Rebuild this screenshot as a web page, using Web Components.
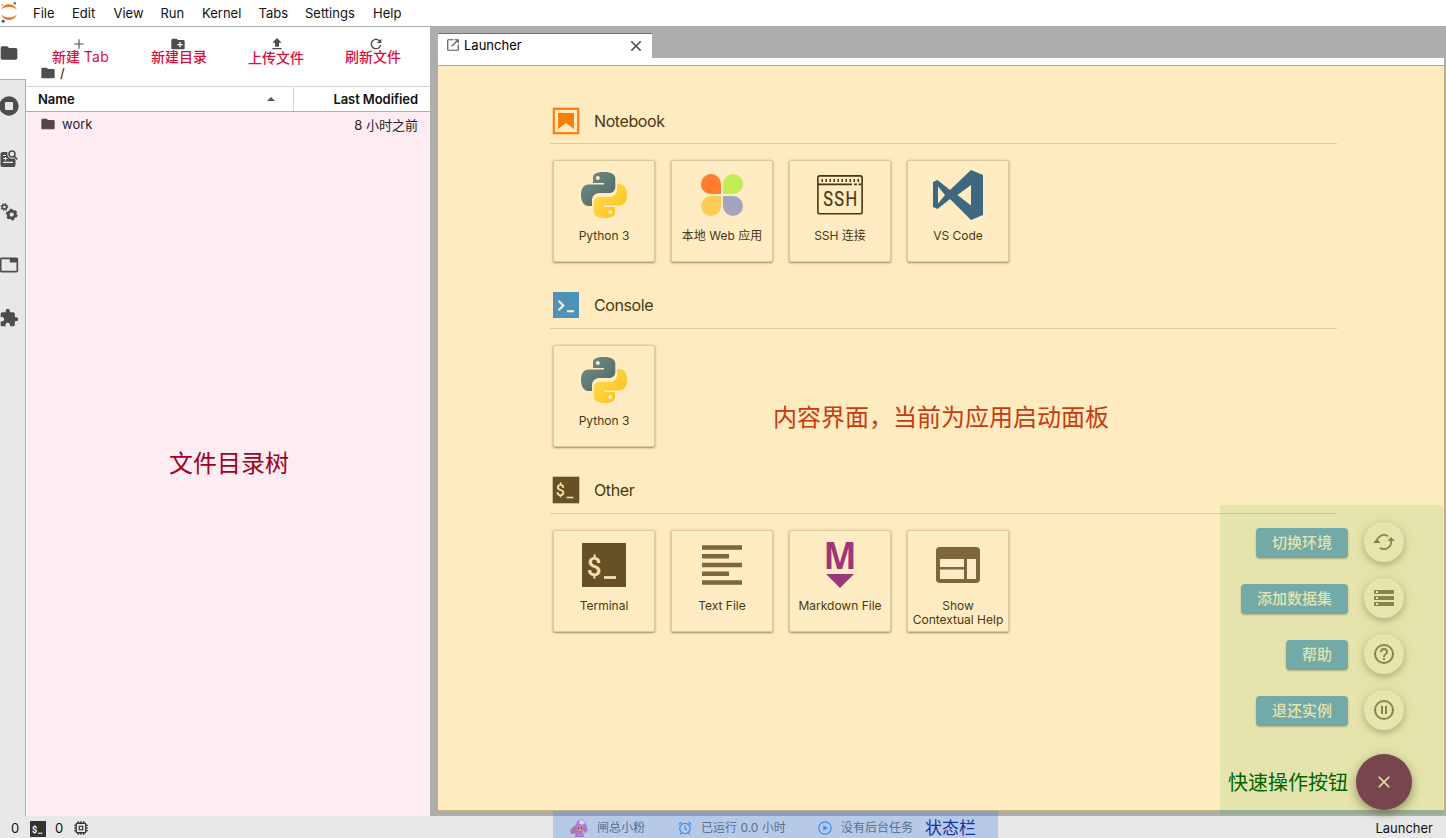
<!DOCTYPE html>
<html lang="zh-CN">
<head>
<meta charset="utf-8">
<title>JupyterLab</title>
<style>
html,body{margin:0;height:100%}
body{font-family:Inter,"Noto Sans CJK SC",sans-serif;font-size:13px;color:#1c1c1c;background:#fff;overflow:hidden}
</style>
</head>
<body>
<lab-app></lab-app>
<script>
const ICONS = {
folder:['0 0 24 24','<path fill="currentColor" d="M10 4H4c-1.1 0-2 .9-2 2v12c0 1.1.9 2 2 2h16c1.1 0 2-.9 2-2V8c0-1.1-.9-2-2-2h-8z"/>'],
plus:['0 0 24 24','<path d="M12 4v16M4 12h16" stroke="currentColor" stroke-width="1.900"/>'],
newfolder:['0 0 24 24','<path fill="currentColor" d="M20 6h-8l-2-2H4c-1.1 0-2 .9-2 2v12c0 1.1.9 2 2 2h16c1.1 0 2-.9 2-2V8c0-1.1-.9-2-2-2zm-1 8h-3v3h-2v-3h-3v-2h3V9h2v3h3v2z"/>'],
upload:['0 0 24 24','<path fill="currentColor" d="M9 16h6v-6h4l-7-7-7 7h4zm-4 2h14v2H5z"/>'],
refresh:['0 0 18 18','<path fill="currentColor" d="M9 13.5c-2.49 0-4.5-2.01-4.5-4.5S6.51 4.5 9 4.5c1.24 0 2.36.52 3.17 1.33L10 8h5V3l-1.76 1.76C12.15 3.68 10.66 3 9 3 5.69 3 3.01 5.69 3.01 9S5.69 15 9 15c2.97 0 5.43-2.16 5.9-5h-1.52c-.46 2-2.24 3.5-4.38 3.5z"/>'],
stop:['0 0 20 20','<circle cx="10" cy="10" r="9.7" fill="currentColor"/><rect x="6" y="6" width="8" height="8" rx=".8" fill="#e8e8e8"/>'],
inspect:['0 0 20 20','<path fill="currentColor" d="M3 3h5.500a5 5 0 0 0 4.500 6.800c.8 0 1.500-.2 2-.5l1.500 1.500V16a2 2 0 0 1-2 2H3.500a2 2 0 0 1-2-2V4.500z"/><path d="M4 6.500h3M4 9.500h4.500M4 13.300h10" stroke="#e8e8e8" stroke-width="1.200"/><path d="M6.500 8v3.500" stroke="#e8e8e8" stroke-width="1"/><circle cx="13" cy="5" r="3" stroke="currentColor" stroke-width="1.600"/><path d="m15 7.200 3.200 3.200" stroke="currentColor" stroke-width="1.700"/>'],
gears:['0 0 20 20','<g fill="none" stroke="currentColor"><circle cx="12.7" cy="12.6" r="3.5" stroke-width="2.8"/><circle cx="12.7" cy="12.6" r="5.1" stroke-width="1.7" stroke-dasharray="2.7 2.64"/><circle cx="5.4" cy="5" r="2.1" stroke-width="1.6"/><circle cx="5.4" cy="5" r="3.3" stroke-width="1.2" stroke-dasharray="1.4 1.19"/></g>'],
tab:['0 0 24 24','<path fill="currentColor" d="M21 3H3c-1.1 0-2 .9-2 2v14c0 1.1.9 2 2 2h18c1.1 0 2-.9 2-2V5c0-1.1-.9-2-2-2zm0 16H3V5h10v4h8z"/>'],
puzzle:['0 0 24 24','<path fill="currentColor" d="M20.5 11H19V7c0-1.1-.9-2-2-2h-4V3.500a2.500 2.500 0 0 0-5 0V5H4c-1.100 0-2 .9-2 2v3.800h1.500c1.500 0 2.700 1.200 2.700 2.700S5 16.200 3.500 16.200H2V20c0 1.100.9 2 2 2h3.800v-1.500c0-1.500 1.200-2.700 2.700-2.700s2.700 1.200 2.700 2.700V22H17c1.100 0 2-.9 2-2v-4h1.500a2.500 2.500 0 0 0 0-5z"/>'],
launch:['0 0 24 24','<path fill="currentColor" d="M20 20H4V4h9V2H4a2 2 0 0 0-2 2v16c0 1.100.9 2 2 2h16a2 2 0 0 0 2-2v-9h-2zM15 2v2h3.600l-9.800 9.800 1.400 1.400L20 5.400V9h2V2z"/>'],
close:['0 0 24 24','<path d="m5 5 14 14M19 5 5 19" stroke="currentColor" stroke-width="2.300"/>'],
notebook:['0 0 28 28','<rect x="1.8" y="1.800" width="24.400" height="24.400" fill="none" stroke="#f97f0d" stroke-width="2.200"/><path fill="#f97f0d" d="M6 6h16v16l-8-6-8 6z"/>'],
console:['0 0 28 28','<path fill="#4e91b9" d="M1 1h26v26H1z"/><path d="m6.500 9.700 4.800 4.800-4.800 4.800" fill="none" stroke="#ffecc5" stroke-width="2.300"/><path d="M15 20.200h7" stroke="#ffecc5" stroke-width="2.200"/>'],
term:['0 0 28 28','<path fill="#655125" d="M.7.700h26.600v26.600H.700z"/><text x="3.800" y="20" font-family="Roboto" font-weight="500" font-size="16" fill="#f7dfae">$</text><path d="M14.500 21.500h7" stroke="#f7dfae" stroke-width="1.600"/>'],
termbig:['0 0 44 44','<path fill="#655125" d="M0 0h44v44H0z"/><text x="4.800" y="32.500" font-family="Roboto" font-weight="500" font-size="26" fill="#f7dfae">$</text><path d="M22 34.500h12" stroke="#f7dfae" stroke-width="2.800"/>'],
python:['0 0 46 46','<defs><linearGradient id="b" x2="1" y2="1"><stop stop-color="#738f8b"/><stop offset="1" stop-color="#4e6560"/></linearGradient><linearGradient id="y" x2="1" y2="1"><stop stop-color="#ffdf55"/><stop offset="1" stop-color="#ffbd17"/></linearGradient></defs><path fill="url(#b)" d="M22.700 0C14 0 12 2.500 12 6v5h11v1.500H7.500C3 12.500 0 16.500 0 23s3 11 7.500 11H11v-6c0-4 3.300-7 7.500-7h9.800c3.500 0 6-2.700 6-6V6.200C34.300 2.600 30.500 0 22.700 0z"/><circle cx="16.800" cy="6" r="2" fill="#ffecc5"/><path fill="url(#y)" d="M23.300 46C32 46 34 43.500 34 40v-5H23v-1.500h15.500C43 33.500 46 29.500 46 23s-3-11-7.500-11H36v6c0 4-3.300 7-7.500 7h-9.800c-3.500 0-6 2.700-6 6v8.800c0 3.600 3.800 6.200 10.600 6.200z"/><circle cx="29.200" cy="40" r="2" fill="#ffecc5"/>'],
web:['0 0 42 42','<path fill="#ff7b2e" d="M20 20H9.500A9.500 9.500 0 0 1 0 10.200 10 10 0 0 1 10 0a10 10 0 0 1 10 10z"/><path fill="#c1ed55" d="M22 20V10A10 10 0 0 1 32 0a10 10 0 0 1 10 10 10 10 0 0 1-10 10z"/><path fill="#fecb59" d="M20 22v10a10 10 0 0 1-20 0 10 10 0 0 1 10-10z"/><path fill="#a5a4bf" d="M22 22h10a10 10 0 1 1-10 10z"/>'],
ssh:['0 0 46 40','<g fill="none" stroke="#483615" stroke-width="1.600"><rect x=".9" y=".9" width="44.200" height="37.800" rx="1.800"/><path d="M1 9.400h34M37 9.400h3M41.500 9.400h3"/><path d="M4.500 5.500h38" stroke-width="3" stroke-dasharray="1.500 2.500"/></g><text transform="translate(6.200 31) scale(.8 1)" letter-spacing="1.700" font-family="Roboto" font-size="20.500" fill="#483615" stroke="#483615" stroke-width=".2">SSH</text>'],
vscode:['0 0 50 50','<path fill="#3d687f" fill-rule="evenodd" d="M38 0 50 5v40l-12 5-21-21L4.500 39 0 37V12l4.500-2L17 20zM38 15 24.500 25 38 35.500zM5 16.500v17l7-8.500z"/>'],
text:['0 0 40 40','<path d="M0 2.500h40M0 11.200h27M0 20h40M0 28.800h27M0 37.500h40" stroke="#7b683d" stroke-width="4.600"/>'],
md:['0 0 32 48','<text x="16" y="27.500" text-anchor="middle" textLength="33" lengthAdjust="spacingAndGlyphs" font-family="Noto Sans" font-weight="700" font-size="37" fill="#9b3778">M</text><path fill="#9b3778" d="M2 33h28L16 47z"/>'],
help:['0 0 44 36','<rect width="44" height="36" rx="4" fill="#7b683d"/><path fill="#ffecc5" d="M4 12h24v8H4zM4 22.500h24V32H4zM31 12h9v20h-9z"/>'],
swap:['0 0 24 24','<g fill="none" stroke="currentColor" stroke-width="1.900"><path d="M4.200 13a7.800 7.800 0 0 1 12.300-7.200M19.800 11a7.800 7.800 0 0 1-12.300 7.200"/></g><path fill="currentColor" d="m.2 13 4-4.500 4 4.500zM23.800 11l-4-4.500-4 4.500z"/>'],
storage:['0 0 20 16','<path fill="currentColor" fill-rule="evenodd" d="M0 0h20v4H0zM2 1v2h2V1zM0 6h20v4H0zM2 7v2h2V7zM0 12h20v4H0zM2 13v2h2v-2z"/>'],
question:['0 0 24 24','<path fill="currentColor" d="M11 18h2v-2h-2zm1-16a10 10 0 1 0 0 20 10 10 0 0 0 0-20zm0 18a8 8 0 1 1 0-16 8 8 0 0 1 0 16zm0-14a4 4 0 0 0-4 4h2a2 2 0 1 1 4 0c0 2-3 1.750-3 5h2c0-2.250 3-2.500 3-5a4 4 0 0 0-4-4z"/>'],
pause:['0 0 24 24','<circle cx="12" cy="12" r="9" fill="none" stroke="currentColor" stroke-width="2"/><path d="M10 8v8M14 8v8" stroke="currentColor" stroke-width="2"/>'],
chip:['0 0 16 16','<path d="M4.800 0v16M8 0v16M11.200 0v16M0 4.800h16M0 8h16M0 11.200h16" stroke="#333" stroke-width="1.300"/><rect x="2.500" y="2.500" width="11" height="11" rx="1.500" fill="#e8e8e8" stroke="#333" stroke-width="1.600"/><rect x="6" y="6" width="4" height="4" fill="none" stroke="#333" stroke-width="1.300"/>'],
sterm:['0 0 16 16','<path fill="#333" d="M0 0h16v16H0z"/><text x="2" y="11.500" font-family="Roboto" font-weight="700" font-size="9" fill="#fff">$</text><path d="M8 12.200h4.500" stroke="#fff"/>'],
alarm:['0 0 14 14','<g fill="none" stroke="#388bf2" stroke-width="1.200"><circle cx="7" cy="7.500" r="5.200"/><path d="M7 4.500v3.300l2 1.200M.8 3.500 3.500 1M13.200 3.500 10.500 1M3.500 11.500 2 13.500M10.500 11.500l1.500 2"/></g>'],
play:['0 0 14 14','<circle cx="7" cy="7" r="6.200" fill="none" stroke="#388bf2" stroke-width="1.200"/><path fill="#388bf2" d="M5.300 4.200v5.600L9.700 7z"/>'],
avatar:['0 0 20 18','<path fill="#b779cf" d="M6 5 8 1l5-.5 3 4 1 4-4 3H7L4 8z"/><path fill="#a678bb" d="m0 11 4-4 4 3-1 4-3 1H1zM12 10l4-2 2 3-3 3zM6 12h7l1 6H5z"/><path fill="#cbd7f5" d="M9.500 1.500 13 1l2 3-3 2-3-1.500z"/><path fill="#c98a9d" d="M7 7h6l-1 5H8z"/><path d="M8.500 8v2M11.500 8v2" stroke="#574879" stroke-width=".9"/><path fill="#c77bce" d="m7 13 3 2 3-2-1 4H8z"/>'],
logo:['0 0 20 26','<path fill="#f37726" d="M1.300 9.500C2.600 6 5.600 4.200 9 4.200s6.400 1.800 7.700 5.300C14.800 7.800 12 7 9 7s-5.800.8-7.700 2.500zM1.300 14.700C2.600 18.300 5.600 20.100 9 20.100s6.400-1.800 7.700-5.400C14.800 16.400 12 17.300 9 17.300s-5.800-.9-7.700-2.600z"/><g fill="#5f5f5f"><circle cx="14.800" cy="3.200" r="1.200"/><circle cx="2.300" cy="5" r=".7"/><circle cx="3.200" cy="21.200" r="1.600"/></g>']
};
function define(name, render){
  customElements.define(name, class extends HTMLElement{
    connectedCallback(){
      if(this.shadowRoot) return;
      this.attachShadow({mode:'open'}).innerHTML = render(this);
    }
  });
}
define('ui-icon', el=>{
  const [box,art]=ICONS[el.getAttribute('name')];
  const w=el.getAttribute('w'), h=el.getAttribute('h')||w;
  return `<style>:host{display:block;flex:none;width:${w}px;height:${h}px}svg{display:block;overflow:visible}</style><svg width="${w}" height="${h}" viewBox="${box}" fill="none">${art}</svg>`;
});
define('menu-bar', ()=>`<style>
:host{display:flex;border-bottom:1px solid #adadab;background:#fff;box-sizing:border-box;height:27px}
nav{display:flex;margin-left:13px;line-height:27px;color:#111}
span{display:block;white-space:nowrap}
</style><ui-icon name="logo" w="20" h="26"></ui-icon><nav>${[['File',39],['Edit',41.500],['View',47],['Run',41.500],['Kernel',56.500],['Tabs',46.500],['Settings',68],['Help',40]].map(([t,w])=>`<span style="width:${w}px">${t}</span>`).join('')}</nav>`);
define('side-rail', ()=>`<style>
:host{display:flex;flex-direction:column;width:26px;background:#e8e8e8;color:#4d4d4d}
div{height:53px;box-sizing:border-box;border-right:1px solid #adadab;display:flex;align-items:center;padding-bottom:2px}
ui-icon{margin-left:-1px}
.on{background:#fff;border-right:0;border-bottom:1px solid #adadab;padding-bottom:0}
.fill{flex:1;height:auto}
</style><div class="on"><ui-icon name="folder" w="20"></ui-icon></div>${['stop','inspect','gears','tab','puzzle'].map(n=>`<div><ui-icon name="${n}" w="20"></ui-icon></div>`).join('')}<div class="fill"></div>`);
define('note-text', ()=>`<style>:host{position:absolute;white-space:nowrap;line-height:1.2;z-index:3}</style><slot></slot>`);
define('file-browser', ()=>`<style>
:host{display:flex;flex-direction:column;width:404px;background:#fff;position:relative;color:#111}
.tools{height:33px;display:grid;grid-template-columns:repeat(4,99px);padding:9px 0 0 3px;box-sizing:border-box;color:#4d4d4d;align-items:start;justify-items:center}
.tools ui-icon:first-child{margin-top:1px}
.crumb{height:26px;display:flex;align-items:center;padding-left:14px;gap:4px;color:#4d4d4d}
.crumb b{font-weight:400;color:#111}
.head{height:26px;box-sizing:border-box;display:flex;border-top:1px solid #d4d4d4;border-bottom:1px solid #adadab;font-weight:600;line-height:25px}
.name{width:268px;box-sizing:border-box;border-right:1px solid #d4d4d4;padding:0 18px 0 12px;display:flex;justify-content:space-between;align-items:center}
.name i{border:4px solid transparent;border-top:0;border-bottom:4px solid #555}
.mod{flex:1;text-align:right;padding-right:12px;letter-spacing:-.08px}
.list{flex:1;background:#fdedf3;margin-left:1px;color:#291e22}
.row{display:flex;align-items:center;height:24px;padding:0 12px 0 13px;gap:6px}
.row span{flex:1}
note-text{font-size:14px;color:#d70f40;font-weight:500}
</style>
<div class="tools"><ui-icon name="plus" w="14"></ui-icon><ui-icon name="newfolder" w="16"></ui-icon><ui-icon name="upload" w="16"></ui-icon><ui-icon name="refresh" w="16"></ui-icon></div>
<div class="crumb"><ui-icon name="folder" w="16"></ui-icon><b>/</b></div>
<div class="head"><div class="name">Name<i></i></div><div class="mod">Last Modified</div></div>
<div class="list"><div class="row"><ui-icon name="folder" w="16" style="color:#54474b"></ui-icon><span>work</span><time>8 小时之前</time></div></div>
<note-text style="left:26px;top:22px">新建 <span style="font-weight:400;letter-spacing:.3px">Tab</span></note-text><note-text style="left:125px;top:22px">新建目录</note-text><note-text style="left:222px;top:23px">上传文件</note-text><note-text style="left:319px;top:22px">刷新文件</note-text>
<note-text style="left:143px;top:423px;font-size:24px;color:#a00026;font-weight:400">文件目录树</note-text>`);
define('launch-card', el=>`<style>
:host{display:flex;flex-direction:column;align-items:center;width:102px;height:102px;box-sizing:border-box;border:1px solid #dccba0;border-radius:2px;box-shadow:0 1px 2px #695a3399,0 0 3px #c9b78966;background:#ffecc2}
.art{height:68px;display:grid;place-items:center}
.label{font-size:12px;line-height:14px;text-align:center;color:#483814;white-space:pre-line}
</style><div class="art"><ui-icon name="${el.getAttribute('icon')}" w="${el.getAttribute('w')}" h="${el.getAttribute('h')}"></ui-icon></div><div class="label"><slot></slot></div>`);
define('launch-section', el=>`<style>
:host{display:block;height:185px}
header{height:47px;box-sizing:border-box;border-bottom:1px solid #ddcca3;display:flex;align-items:center;gap:14px;padding:1px 0 0 2px;font-size:16px;letter-spacing:-.4px;color:#483814}
:host(:not(:first-of-type)) header{padding:0 0 1px 2px}
.cards{display:flex;gap:16px;padding:16px 0 0 3px}
</style><header><ui-icon name="${el.getAttribute('icon')}" w="28"></ui-icon><span>${el.getAttribute('label')}</span></header><div class="cards"><slot></slot></div>`);
define('quick-action', el=>`<style>
:host{display:flex;align-items:center;justify-content:flex-end;gap:16px;height:40px}
span{height:30px;box-sizing:border-box;padding:0 16px;margin-top:2px;border-radius:4px;background:#73aaa7;color:#e4e4ac;font-size:15px;line-height:29px;font-weight:500;box-shadow:0 1px 2px #81815a88}
div{width:40px;height:40px;border-radius:50%;background:#e5e5ae;display:grid;place-items:center;color:#85854c;box-shadow:0 3px 6px #77774466,0 1px 12px #8888552e}
</style><span><slot></slot></span><div><ui-icon name="${el.getAttribute('icon')}" w="${el.getAttribute('w')}" h="${el.getAttribute('h')}"></ui-icon></div>`);
define('quick-actions', ()=>`<style>
:host{position:absolute;left:1220px;top:505px;width:223px;height:309px;box-sizing:border-box;padding:17px 39px 0 0;z-index:2;display:flex;flex-direction:column;gap:16px;background:linear-gradient(#e4e4ac 305px,#93b094 305px)}
.line{position:absolute;left:0;top:8px;width:117px;height:1px;background:#c8c890}
.main{display:flex;align-items:center;justify-content:flex-end;gap:8px;margin:8px -8px 0 0;color:#006500;font-size:20px;white-space:nowrap}
.main span{margin-top:-2px}
.fab{width:56px;height:56px;border-radius:50%;background:#77454c;color:#e4e4ac;display:grid;place-items:center;box-shadow:0 4px 8px #55553077,0 2px 15px #77774433}
</style><div class="line"></div>
<quick-action icon="swap" w="22" h="22">切换环境</quick-action>
<quick-action icon="storage" w="20" h="16">添加数据集</quick-action>
<quick-action icon="question" w="24" h="24">帮助</quick-action>
<quick-action icon="pause" w="24" h="24">退还实例</quick-action>
<div class="main"><span>快速操作按钮</span><div class="fab"><ui-icon name="close" w="18"></ui-icon></div></div>`);
define('main-dock', ()=>`<style>
:host{display:flex;flex-direction:column;flex:1;padding:6px 0 5px 8px}
.tab{width:214px;height:25px;box-sizing:border-box;border-top:1px solid #2f7de0;background:#fff;display:flex;align-items:center;padding:0 8px 0 8px;gap:5px;color:#000}
.tab span{flex:1;padding-bottom:2px}
.bar{height:8px;box-sizing:border-box;background:#fff;border-bottom:1px solid #b0a789;margin-right:2px}
.body{flex:1;background:#ffebc0;padding:31px 107px 0 112px;border-right:2px solid #bdaa87;border-bottom:1px solid #c8b27b;position:relative}
</style>
<div class="tab"><ui-icon name="launch" w="14" style="color:#555;margin-top:-2px"></ui-icon><span style="margin-left:-1px">Launcher</span><ui-icon name="close" w="16" style="color:#555"></ui-icon></div><div class="bar"></div>
<div class="body">
<launch-section icon="notebook" label="Notebook"><launch-card icon="python" w="46" h="46">Python 3</launch-card><launch-card icon="web" w="42" h="42">本地 Web 应用</launch-card><launch-card icon="ssh" w="46" h="40">SSH 连接</launch-card><launch-card icon="vscode" w="50" h="50">VS Code</launch-card></launch-section>
<launch-section icon="console" label="Console"><launch-card icon="python" w="46" h="46">Python 3</launch-card></launch-section>
<launch-section icon="term" label="Other"><launch-card icon="termbig" w="44" h="44">Terminal</launch-card><launch-card icon="text" w="40" h="40">Text File</launch-card><launch-card icon="md" w="32" h="48">Markdown File</launch-card><launch-card icon="help" w="44" h="36">Show
Contextual Help</launch-card></launch-section>
<note-text style="left:335px;top:338px;font-size:24px;color:#c43c10">内容界面，当前为应用启动面板</note-text>
</div>`);
define('status-bar', ()=>`<style>
:host{display:flex;height:22px;background:#e8e8e8;position:relative;line-height:24px;color:#111;justify-content:space-between}
.left{display:flex;align-items:center;padding:3px 0 0 11px;box-sizing:border-box}
.left span{width:19px;line-height:19px}
.mid{position:absolute;left:553px;top:-5px;width:445px;height:27px;background:linear-gradient(#8c9fc0 5px,#b6cae8 5px);z-index:2;display:flex;align-items:center;box-sizing:border-box;padding:6px 0 0 17px;font-size:12px;color:#587092;white-space:nowrap}
.mid span,.mid b{line-height:18px}
.mid b{font-size:17px;font-weight:400;color:#1835a0}
.right{padding-right:13px}
</style><div class="left"><span>0</span><ui-icon name="sterm" w="16"></ui-icon><span style="margin-left:9px">0</span><ui-icon name="chip" w="14" style="margin-top:-1px"></ui-icon></div>
<div class="mid"><ui-icon name="avatar" w="20" h="18"></ui-icon><span style="width:81px;margin-left:7px">闸总小粉</span><ui-icon name="alarm" w="14"></ui-icon><span style="width:117px;margin-left:9px">已运行 0.0 小时</span><ui-icon name="play" w="14"></ui-icon><span style="width:84px;margin-left:9px">没有后台任务</span><b>状态栏</b></div>
<div class="right">Launcher</div>`);
define('lab-app', ()=>`<style>
:host{display:flex;flex-direction:column;height:838px;position:relative}
main{flex:1;display:flex;background:#adadab;min-height:0}
</style><menu-bar></menu-bar><main><side-rail></side-rail><file-browser></file-browser><main-dock></main-dock></main><status-bar></status-bar><quick-actions></quick-actions>`);
</script>
</body>
</html>
